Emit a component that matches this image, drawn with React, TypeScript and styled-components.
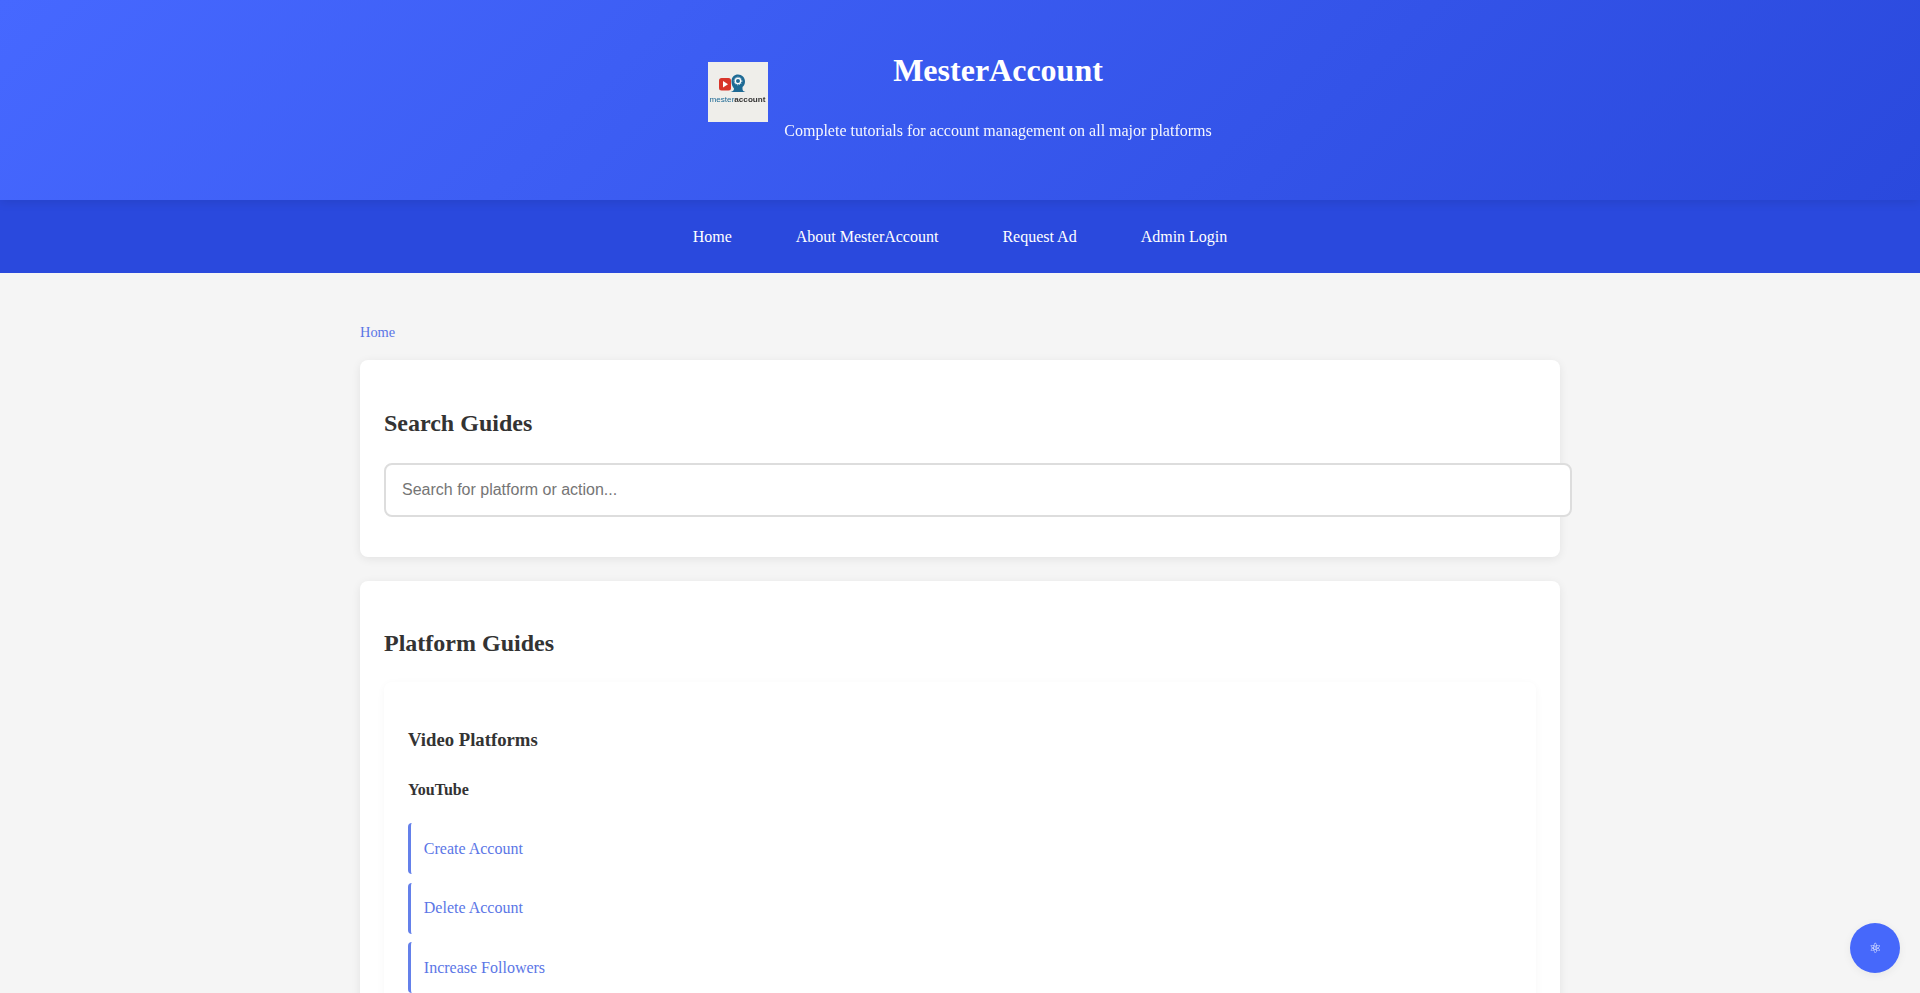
import React from 'react'
import styled, { createGlobalStyle } from 'styled-components'

const GlobalStyle = createGlobalStyle`
  * { margin: 0; padding: 0; box-sizing: border-box; }
  body {
    font-family: "Liberation Serif", "Times New Roman", serif;
    line-height: 1.6;
    color: #333;
    background: #f5f5f5;
  }
`

const Header = styled.header`
  position: relative;
  background: linear-gradient(135deg, #4668ff 0%, #2a49dd 100%);
  color: #fff;
  height: 200px;
  display: flex;
  justify-content: center;
  align-items: flex-start;
  gap: 16px;
  padding-top: 32px;
  box-shadow: 0 2px 10px rgba(0, 0, 0, 0.1);
`

const LogoBox = styled.div`
  width: 60px;
  height: 60px;
  margin-top: 30px;
  background: #efeeea;
  flex: none;

  svg {
    display: block;
    filter: blur(0.3px);
  }
`

const Brand = styled.div`
  text-align: center;
`

const Title = styled.h1`
  font-size: 32px;
  line-height: 51.2px;
  margin-top: 13px;
  margin-bottom: 21.4px;
`

const Tagline = styled.p`
  font-size: 16px;
  line-height: 25.6px;
  opacity: 0.95;
`

const Nav = styled.nav`
  background: #2a49dd;
  height: 73px;
  display: flex;
  justify-content: center;
  align-items: center;
  gap: 64px;
`

const NavLink = styled.a`
  color: #fff;
  text-decoration: none;
  font-size: 16px;
`

const Main = styled.main`
  width: 1200px;
  margin: 0 auto;
  padding-top: 48px;
`

const Breadcrumb = styled.div`
  font-size: 14.4px;
  margin-bottom: 16px;
`

const BlueLink = styled.a`
  color: #5b76e6;
  text-decoration: none;
`

const Card = styled.section`
  background: #fff;
  border-radius: 8px;
  padding: 24px;
  margin-bottom: 24px;
  box-shadow: 0 2px 10px rgba(0, 0, 0, 0.08);
`

const CardTitle = styled.h2`
  font-size: 24px;
  color: #333;
  line-height: 38.4px;
  margin: 19.92px 0 20.7px;
`

const GuidesTitle = styled(CardTitle)`
  margin: 18.74px 0 19.92px;
`

const SearchInput = styled.input`
  display: block;
  box-sizing: content-box;
  width: 100%;
  padding: 16px;
  border: 2px solid #ddd;
  border-radius: 8px;
  font-family: "Liberation Sans", Arial, sans-serif;
  font-size: 16px;
  line-height: 18px;
  height: 18px;
  margin-bottom: 15.9px;
  background: #fff;
`

const Group = styled.div`
  background: #fff;
  border-radius: 8px;
  padding: 24px;
  box-shadow: 0 2px 8px rgba(0, 0, 0, 0.04);
`

const GroupTitle = styled.h3`
  font-size: 18.72px;
  color: #333;
  line-height: 1.6;
  margin: 18.72px 0;
`

const PlatformTitle = styled.h4`
  font-size: 16px;
  color: #333;
  line-height: 1.6;
  margin: 22.2px 0 20.4px;
`

const GuideList = styled.ul`
  list-style: none;
`

const GuideItem = styled.li`
  margin-bottom: 8.5px;
`

const GuideLink = styled(BlueLink)`
  display: block;
  padding: 12.8px;
  font-size: 16px;
  line-height: 25.6px;
  border-left: 3px solid #6480ea;
  border-radius: 4px;
`

const FloatButton = styled.button`
  position: fixed;
  right: 20px;
  bottom: 20px;
  width: 50px;
  height: 50px;
  border: 0;
  border-radius: 50%;
  background: #4668fb;
  color: #fff;
  font-size: 14px;
  box-shadow: 0 2px 10px rgba(0, 0, 0, 0.06);
`

const guides = ['Create Account', 'Delete Account', 'Increase Followers']

function Logo() {
  return (
    <LogoBox>
      <svg width="60" height="60" viewBox="0 0 60 60">
        <rect x="11" y="16" width="12" height="12.5" rx="2.5" fill="#d8352a" />
        <path d="M15 19l5 3.2-5 3.2z" fill="#fff" />
        <path
          d="M22.5 30c2.500-.5 3.500-1.500 3.500-3.500-1.500-2-2.500-4-2.500-7 0-4.500 3-7 6.500-7 4 0 7 3 7 7 0 2.500-1 4.500-2.500 5.500v2c0 1.500 1 2.500 3 3z"
          fill="#1e6a94"
        />
        <circle cx="30" cy="19" r="2.600" fill="none" stroke="#fff" strokeWidth="1.2" />
        <circle cx="30" cy="19" r="3.800" fill="none" stroke="#fff" strokeWidth="1" strokeDasharray="1 1" />
        <text
          x="1.500"
          y="39.500"
          fontFamily="Liberation Sans"
          fontSize="8"
          textLength="56"
          lengthAdjust="spacingAndGlyphs"
        >
          <tspan fill="#1e6a94">mester</tspan>
          <tspan fill="#333" fontWeight="700">account</tspan>
        </text>
      </svg>
    </LogoBox>
  )
}

export default function App() {
  return (
    <>
      <GlobalStyle />
      <Header>
        <Logo />
        <Brand>
          <Title>MesterAccount</Title>
          <Tagline>Complete tutorials for account management on all major platforms</Tagline>
        </Brand>
      </Header>
      <Nav>
        <NavLink href="#">Home</NavLink>
        <NavLink href="#">About MesterAccount</NavLink>
        <NavLink href="#">Request Ad</NavLink>
        <NavLink href="#">Admin Login</NavLink>
      </Nav>
      <Main>
        <Breadcrumb>
          <BlueLink href="#">Home</BlueLink>
        </Breadcrumb>
        <Card>
          <CardTitle>Search Guides</CardTitle>
          <SearchInput placeholder="Search for platform or action..." />
        </Card>
        <Card>
          <GuidesTitle>Platform Guides</GuidesTitle>
          <Group>
            <GroupTitle>Video Platforms</GroupTitle>
            <PlatformTitle>YouTube</PlatformTitle>
            <GuideList>
              {guides.map(g => (
                <GuideItem key={g}>
                  <GuideLink href="#">{g}</GuideLink>
                </GuideItem>
              ))}
            </GuideList>
          </Group>
        </Card>
      </Main>
      <FloatButton>⚛</FloatButton>
    </>
  )
}
